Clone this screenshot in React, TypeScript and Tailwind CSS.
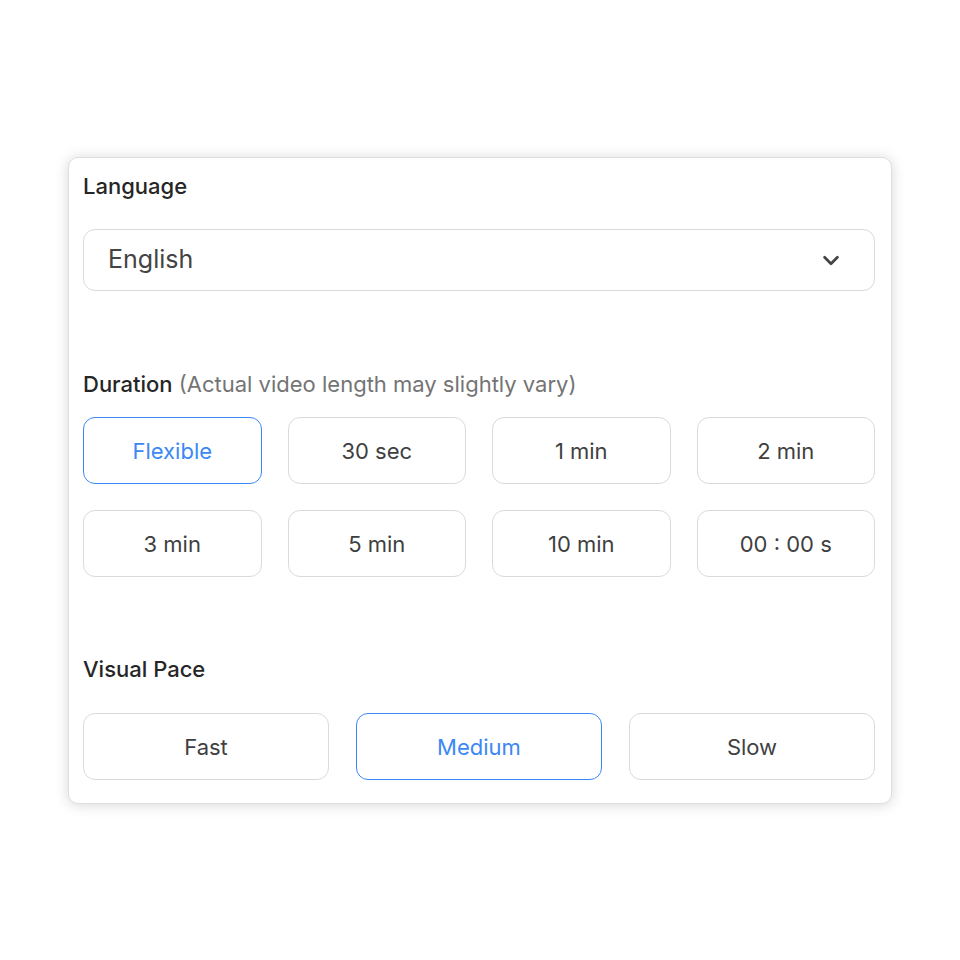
import { useState } from "react";

const durations = ["Flexible", "30 sec", "1 min", "2 min", "3 min", "5 min", "10 min", "00 : 00 s"];
const paces = ["Fast", "Medium", "Slow"];

const optionBase =
  "flex items-center justify-center rounded-[12px] bg-white text-[22px] leading-none";
const optionIdle = "border border-[#dadada] text-[#3f3f3f]";
const optionActive = "border-[1.6px] border-[#3b88f5] text-[#3b88f5]";

export default function App() {
  const [duration, setDuration] = useState("Flexible");
  const [pace, setPace] = useState("Medium");

  return (
    <div
      className="flex h-[960px] w-[960px] justify-center bg-white pt-[157px]"
      style={{ fontFamily: "Inter, 'Noto Sans', sans-serif" }}
    >
      <div className="h-[647px] w-[824px] rounded-[10px] border border-[#dedede] bg-white pl-[14px] pr-[16px] pt-[14px] shadow-[0_1px_14px_rgba(0,0,0,0.16)]">
        <div className="h-[28px] text-[22px] font-medium leading-[28px] text-[#262626]">Language</div>

        <button className="mt-[29px] flex h-[62px] w-full items-center justify-between rounded-[12px] border border-[#d9d9d9] bg-white pl-[24px] pr-[32px] text-[25px] text-[#444]">
          <span>English</span>
          <svg width="22" height="22" viewBox="0 0 24 24" fill="none" stroke="#444" strokeWidth="3" strokeLinecap="round" strokeLinejoin="round">
            <path d="M5 9l7 7 7-7" />
          </svg>
        </button>

        <div className="mt-[79px] h-[28px] text-[22px] leading-[28px]">
          <span className="font-medium text-[#262626]">Duration</span>{" "}
          <span className="text-[#747474]">(Actual video length may slightly vary)</span>
        </div>

        <div className="mt-[19px] grid grid-cols-4 gap-x-[26px] gap-y-[26px]">
          {durations.map((d) => (
            <button
              key={d}
              onClick={() => setDuration(d)}
              className={`${optionBase} h-[67px] ${d === duration ? optionActive : optionIdle}`}
            >
              {d}
            </button>
          ))}
        </div>

        <div className="mt-[78px] h-[28px] text-[22px] font-medium leading-[28px] text-[#262626]">Visual Pace</div>

        <div className="mt-[30px] grid grid-cols-3 gap-[27px]">
          {paces.map((p) => (
            <button
              key={p}
              onClick={() => setPace(p)}
              className={`${optionBase} h-[67px] ${p === pace ? optionActive : optionIdle}`}
            >
              {p}
            </button>
          ))}
        </div>
      </div>
    </div>
  );
}
